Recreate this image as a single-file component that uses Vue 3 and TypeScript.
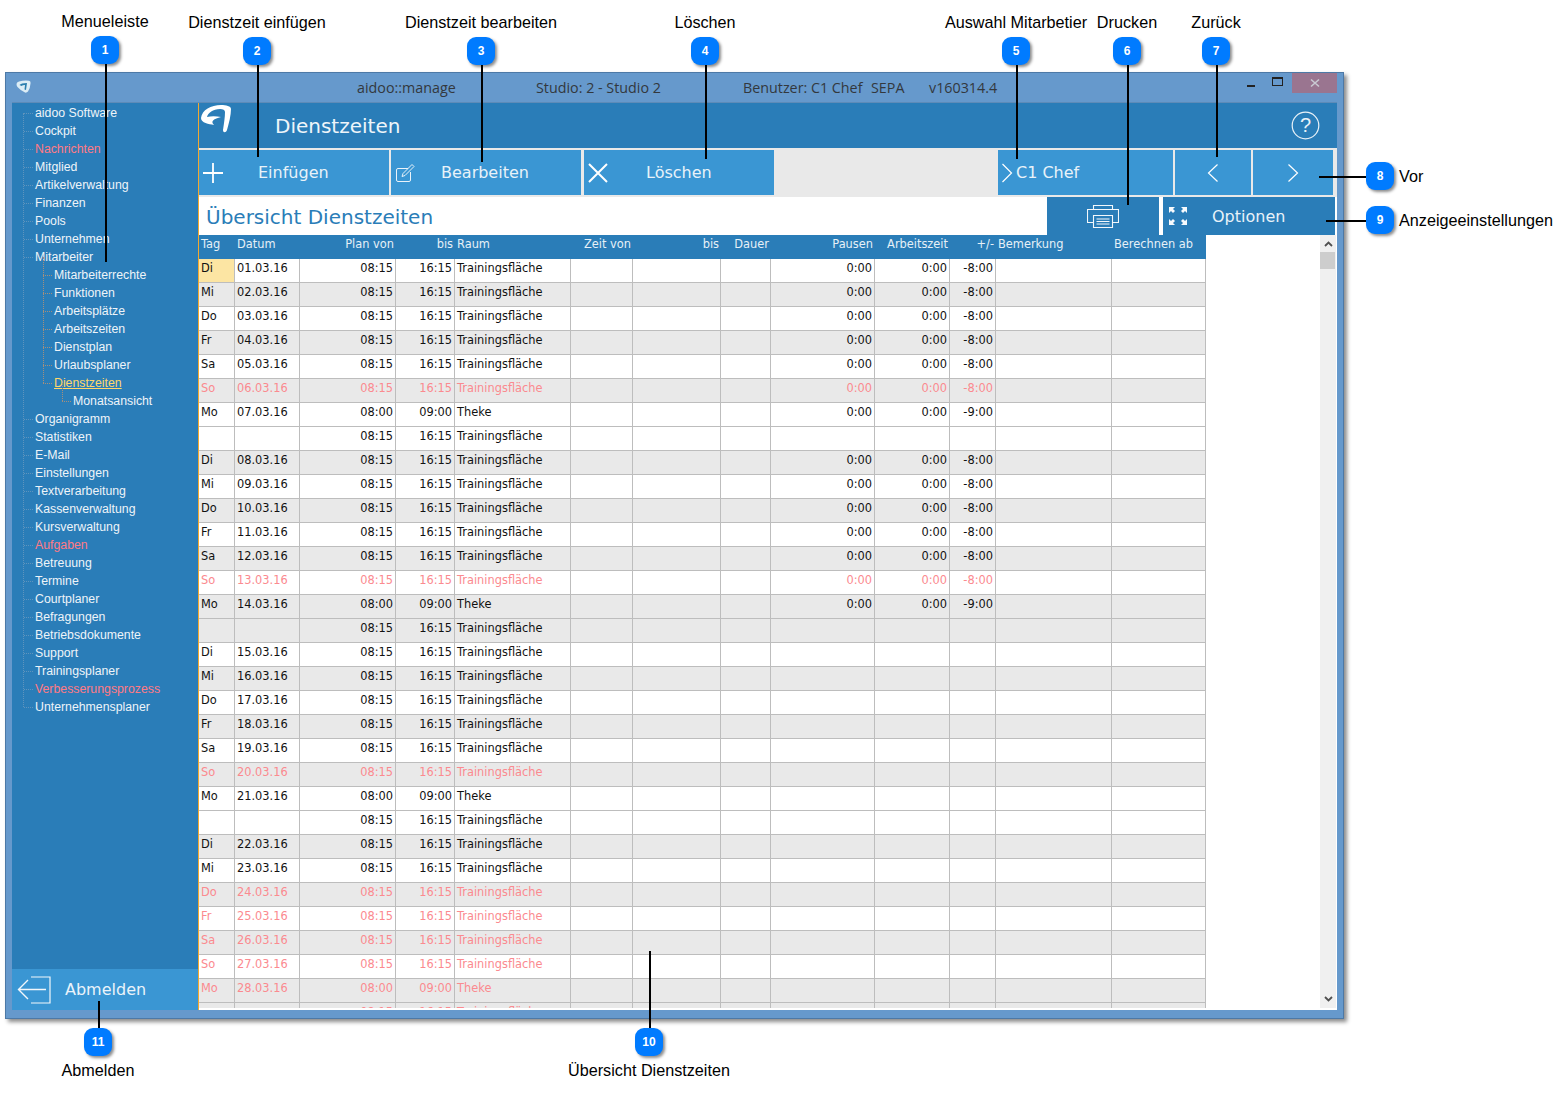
<script setup lang="ts">
interface MenuItem { text: string; level: number; red?: boolean; active?: boolean }
interface Callout { n: number; x: number; y: number; label: string; lx: number; ly: number; x2: number; y2: number; side?: boolean }
interface Row { tag: string; date: string; von: string; bis: string; raum: string; totals: string; red: boolean; band: boolean }

const menu: MenuItem[] = [
  { text: "aidoo Software", level: 0 },
  { text: "Cockpit", level: 0 },
  { text: "Nachrichten", level: 0, red: true },
  { text: "Mitglied", level: 0 },
  { text: "Artikelverwaltung", level: 0 },
  { text: "Finanzen", level: 0 },
  { text: "Pools", level: 0 },
  { text: "Unternehmen", level: 0 },
  { text: "Mitarbeiter", level: 0 },
  { text: "Mitarbeiterrechte", level: 1 },
  { text: "Funktionen", level: 1 },
  { text: "Arbeitsplätze", level: 1 },
  { text: "Arbeitszeiten", level: 1 },
  { text: "Dienstplan", level: 1 },
  { text: "Urlaubsplaner", level: 1 },
  { text: "Dienstzeiten", level: 1, active: true },
  { text: "Monatsansicht", level: 2 },
  { text: "Organigramm", level: 0 },
  { text: "Statistiken", level: 0 },
  { text: "E-Mail", level: 0 },
  { text: "Einstellungen", level: 0 },
  { text: "Textverarbeitung", level: 0 },
  { text: "Kassenverwaltung", level: 0 },
  { text: "Kursverwaltung", level: 0 },
  { text: "Aufgaben", level: 0, red: true },
  { text: "Betreuung", level: 0 },
  { text: "Termine", level: 0 },
  { text: "Courtplaner", level: 0 },
  { text: "Befragungen", level: 0 },
  { text: "Betriebsdokumente", level: 0 },
  { text: "Support", level: 0 },
  { text: "Trainingsplaner", level: 0 },
  { text: "Verbesserungsprozess", level: 0, red: true },
  { text: "Unternehmensplaner", level: 0 },
];

const columns = [
  { name: "Tag", w: 36 }, { name: "Datum", w: 65 }, { name: "Plan von", w: 96, right: true },
  { name: "bis", w: 59, right: true }, { name: "Raum", w: 116 }, { name: "Zeit von", w: 62, right: true },
  { name: "bis", w: 88, right: true }, { name: "Dauer", w: 50, right: true }, { name: "Pausen", w: 104, right: true },
  { name: "Arbeitszeit", w: 75, right: true }, { name: "+/-", w: 46, right: true },
  { name: "Bemerkung", w: 116 }, { name: "Berechnen ab", w: 94 },
];

// Zeilen pro Tag: Montag hat zwei Einträge, die Streifen laufen pro Tag
function buildRows(): Row[] {
  const names = ["Di", "Mi", "Do", "Fr", "Sa", "So", "Mo"];
  const rows: Row[] = [];
  let band = false;
  for (let d = 1; d <= 28; d++) {
    const tag = names[(d - 1) % 7];
    const date = String(d).padStart(2, "0") + ".03.16";
    const red = tag === "So" || d >= 24;
    const totals = d <= 14;
    if (tag === "Mo") {
      rows.push({ tag, date, von: "08:00", bis: "09:00", raum: "Theke", totals: totals ? "-9:00" : "", red, band });
      rows.push({ tag: "", date: "", von: "08:15", bis: "16:15", raum: "Trainingsfläche", totals: "", red, band });
    } else {
      rows.push({ tag, date, von: "08:15", bis: "16:15", raum: "Trainingsfläche", totals: totals ? "-8:00" : "", red, band });
    }
    band = !band;
  }
  return rows;
}
const rows = buildRows();

const callouts: Callout[] = [
  { n: 1, x: 105, y: 50, label: "Menueleiste", lx: 105, ly: 21, x2: 105, y2: 262 },
  { n: 2, x: 257, y: 51, label: "Dienstzeit einfügen", lx: 257, ly: 22, x2: 257, y2: 157 },
  { n: 3, x: 481, y: 51, label: "Dienstzeit bearbeiten", lx: 481, ly: 22, x2: 481, y2: 162 },
  { n: 4, x: 705, y: 51, label: "Löschen", lx: 705, ly: 22, x2: 705, y2: 159 },
  { n: 5, x: 1016, y: 51, label: "Auswahl Mitarbetier", lx: 1016, ly: 22, x2: 1016, y2: 159 },
  { n: 6, x: 1127, y: 51, label: "Drucken", lx: 1127, ly: 22, x2: 1127, y2: 205 },
  { n: 7, x: 1216, y: 51, label: "Zurück", lx: 1216, ly: 22, x2: 1216, y2: 157 },
  { n: 8, x: 1380, y: 176, label: "Vor", lx: 1399, ly: 176, x2: 1319, y2: 176, side: true },
  { n: 9, x: 1380, y: 220, label: "Anzeigeeinstellungen", lx: 1399, ly: 220, x2: 1326, y2: 220, side: true },
  { n: 10, x: 649, y: 1042, label: "Übersicht Dienstzeiten", lx: 649, ly: 1070, x2: 649, y2: 951 },
  { n: 11, x: 98, y: 1042, label: "Abmelden", lx: 98, ly: 1070, x2: 98, y2: 1001 },
];

function lineStyle(c: Callout) {
  if (c.side) {
    return { left: c.x2 + "px", top: c.y + "px", width: c.x - c.x2 + "px", height: "1.5px" };
  }
  const top = Math.min(c.y, c.y2);
  return { left: c.x + "px", top: top + "px", width: "1.5px", height: Math.abs(c.y2 - c.y) + "px" };
}
</script>

<template>
  <div class="page">
    <div class="window">
      <div class="titlebar">
        <svg class="app-icon" width="15" height="13" viewBox="0 0 15 13">
          <path d="M.5 4Q.5 2 3 1.5Q8 .2 13 .8Q14.8 1 14.6 3Q14.3 8 12 11.5Q10.5 13 9 12.5Q4 10 1.5 7Q.5 6 .5 4Z" fill="#dcedf5" />
          <path d="M3.5 5Q5 3 11 3L10 10 8.5 9.6 9 5Q6.5 5 5.5 6Z" fill="#2b7fae" />
        </svg>
        <span class="t1">aidoo::manage</span>
        <span class="t2">Studio: 2 - Studio 2</span>
        <span class="t3">Benutzer: C1 Chef</span>
        <span class="t4">SEPA</span>
        <span class="t5">v160314.4</span>
        <div class="win-btns">
          <span class="win-min"></span>
          <span class="win-max"></span>
          <span class="win-close">
            <svg width="10" height="10" viewBox="0 0 10 10"><path d="M1 1.5 9 8.5M9 1.5 1 8.5" stroke="#c9c9d2" stroke-width="1.6" /></svg>
          </span>
        </div>
      </div>

      <div class="client">
        <aside class="sidebar">
          <div class="tree">
            <div class="tree-inner">
              <div
                v-for="m in menu"
                :key="m.text"
                class="tree-item"
                :class="['lv' + m.level, { red: m.red, active: m.active }]"
              >
                <span>{{ m.text }}</span>
              </div>
            </div>
          </div>
          <div class="logout">
            <svg width="34" height="28" viewBox="0 0 34 28" fill="none" stroke="#f2f7fb" stroke-width="1.2">
              <path d="M14 1H33V27H14" />
              <path d="M29 13.5H1.5M11 4 1.5 13.5 11 23" stroke-width="1.4" />
            </svg>
            <span>Abmelden</span>
          </div>
        </aside>

        <main class="main">
          <header class="head">
            <svg class="logo" width="34" height="30" viewBox="0 0 34 30">
              <path d="M2 14C3 6 12 1 22 1C27 1 32 2 32 5C32 11 30 19 28 26C27 29 24 29 24 26C25 19 26 13 26 8C26 6 24 5 21 5C14 5 9 9 8 13C12 12 17 12 22 13C15 15 11 17 15 21C10 20 2 19 2 14Z" fill="#fff" />
            </svg>
            <h1>Dienstzeiten</h1>
            <svg class="help" width="29" height="29" viewBox="0 0 29 29">
              <circle cx="14.5" cy="14.5" r="13.3" fill="none" stroke="#eaf2f8" stroke-width="1.2" />
              <text x="14.5" y="21" text-anchor="middle" class="help-q">?</text>
            </svg>
          </header>

          <div class="toolbar">
            <div class="btn w-ins">
              <svg width="22" height="22" viewBox="0 0 22 22"><path d="M11 1V21M1 11H21" stroke="#fff" stroke-width="1.8" /></svg>
              <span class="btn-ins">Einfügen</span>
            </div>
            <div class="btn w-edit">
              <svg width="20" height="20" viewBox="0 0 20 20" fill="none" stroke="#e9f3fa" stroke-width="1">
                <path d="M13 5.5H3Q1.5 5.5 1.5 7V17Q1.5 18.5 3 18.5H14Q15.5 18.5 15.5 17V9" />
                <path d="M7 13.5 8 10.5 17 1.5 19 3.5 10 12.5Z" />
              </svg>
              <span class="btn-edit">Bearbeiten</span>
            </div>
            <div class="btn w-del">
              <svg width="22" height="22" viewBox="0 0 22 22"><path d="M2 2 20 20M20 2 2 20" stroke="#fff" stroke-width="2" /></svg>
              <span class="btn-del">Löschen</span>
            </div>
            <div class="spacer"></div>
            <div class="btn w-chef">
              <svg width="12" height="22" viewBox="0 0 12 22" fill="none"><path d="M1.5 2 10.5 11 1.5 20" stroke="#fff" stroke-width="1.2" /></svg>
              <span class="btn-chef">C1 Chef</span>
            </div>
            <div class="btn w-prev center">
              <svg width="12" height="20" viewBox="0 0 12 20" fill="none"><path d="M10.5 1.5 1.5 10 10.5 18.5" stroke="#fff" stroke-width="1.2" /></svg>
            </div>
            <div class="btn w-next center">
              <svg width="12" height="20" viewBox="0 0 12 20" fill="none"><path d="M1.5 1.5 10.5 10 1.5 18.5" stroke="#fff" stroke-width="1.2" /></svg>
            </div>
          </div>

          <div class="subbar">
            <div class="subtitle">Übersicht Dienstzeiten</div>
            <div class="print">
              <svg width="32" height="23" viewBox="0 0 32 23" fill="none" stroke="#f2f7fb" stroke-width="1.1">
                <path d="M6.5 4.5V.5H25.5V4.5" />
                <path d="M6.5 17.5H.5V4.5H31.5V17.5H25.5" />
                <path d="M6.5 10.5H25.5V22.5H6.5Z" />
                <path d="M9.5 14H22.5M9.5 16.5H22.5M9.5 19H22.5" />
              </svg>
            </div>
            <div class="options">
              <svg width="18" height="18" viewBox="0 0 18 18" fill="#f6fafd">
                <path d="M0 0H6L4 2 6 4 4 6 2 4 0 6ZM18 0V6L16 4 14 6 12 4 14 2 12 0ZM0 18V12L2 14 4 12 6 14 4 16 6 18ZM18 18H12L14 16 12 14 14 12 16 14 18 12Z" />
              </svg>
              <span>Optionen</span>
            </div>
          </div>

          <div class="grid-area">
            <div class="table-clip">
              <table class="times">
                <colgroup>
                  <col v-for="(c, i) in columns" :key="i" :style="{ width: c.w + 'px' }" />
                </colgroup>
                <thead>
                  <tr>
                    <th v-for="(c, i) in columns" :key="i" :class="{ right: c.right }">{{ c.name }}</th>
                  </tr>
                </thead>
                <tbody>
                  <tr v-for="(r, i) in rows" :key="i" :class="{ band: r.band, red: r.red }">
                    <td :class="{ today: i === 0 }">{{ r.tag }}</td>
                    <td class="date">{{ r.date }}</td>
                    <td class="right">{{ r.von }}</td>
                    <td class="right">{{ r.bis }}</td>
                    <td>{{ r.raum }}</td>
                    <td></td>
                    <td></td>
                    <td></td>
                    <td class="right">{{ r.totals ? "0:00" : "" }}</td>
                    <td class="right">{{ r.totals ? "0:00" : "" }}</td>
                    <td class="right">{{ r.totals }}</td>
                    <td></td>
                    <td></td>
                  </tr>
                </tbody>
              </table>
            </div>
            <div class="scrollbar">
              <svg class="arrow-up" width="9" height="6" viewBox="0 0 9 6" fill="none"><path d="M1 5 4.5 1.5 8 5" stroke="#505050" stroke-width="1.8" /></svg>
              <div class="thumb"></div>
              <svg class="arrow-down" width="9" height="6" viewBox="0 0 9 6" fill="none"><path d="M1 1 4.5 4.5 8 1" stroke="#505050" stroke-width="1.8" /></svg>
            </div>
          </div>
        </main>
      </div>
    </div>

    <template v-for="c in callouts" :key="c.n">
      <div class="c-line" :style="lineStyle(c)"></div>
      <div class="c-badge" :style="{ left: c.x - 14 + 'px', top: c.y - 14 + 'px' }">{{ c.n }}</div>
      <div class="c-label" :class="{ side: c.side }" :style="{ left: c.lx + 'px', top: c.ly - 10 + 'px' }">{{ c.label }}</div>
    </template>
  </div>
</template>

<style>
html,
body {
  margin: 0;
  background: #fff;
}
</style>

<style scoped>
.page {
  position: relative;
  width: 1568px;
  height: 1096px;
  padding: 72px 0 0 5px;
  box-sizing: border-box;
  overflow: hidden;
  font-family: "Liberation Sans", Arial, sans-serif;
}
.window {
  width: 1339px;
  height: 947px;
  box-sizing: border-box;
  background: #6699cc;
  border: 1px solid #4d79a6;
  box-shadow: 3px 3px 4px rgba(0, 0, 0, 0.45);
  display: flex;
  flex-direction: column;
}
.titlebar {
  height: 29px;
  display: flex;
  align-items: center;
  padding-left: 10px;
  position: relative;
  color: #33383d;
  font-family: "Open Sans", sans-serif;
  font-size: 14.3px;
}
.app-icon { margin: -3px 326px 0 0; flex: none; }
.t1 { width: 179px; }
.t2 { width: 207px; }
.t3 { width: 128px; }
.t4 { width: 58px; }
.win-btns {
  position: absolute;
  right: 6px;
  top: 0;
  height: 20px;
  display: flex;
}
.win-min {
  width: 8px;
  height: 2px;
  margin: 12px 17px 0 0;
  background: #222;
}
.win-max {
  width: 9px;
  height: 6px;
  margin: 4px 9px 0 0;
  border: 1px solid #222;
  border-top-width: 2px;
}
.win-close {
  width: 45px;
  height: 20px;
  background: #9a7590;
  display: flex;
  align-items: center;
  justify-content: center;
}

.client {
  margin: 0 6px;
  height: 908px;
  display: flex;
  border-top: 1px solid #5d8bb8;
  box-sizing: border-box;
}
.sidebar {
  width: 187px;
  flex: none;
  box-sizing: border-box;
  background: #2a7db8;
  border-right: 1px solid #f0a830;
  display: flex;
  flex-direction: column;
  justify-content: space-between;
}
.tree {
  margin: 10px 0 0 11px;
  height: 594px;
  border-left: 1px dotted #5f94bd;
}
.tree-inner { margin-top: -9px; }
.tree-item {
  position: relative;
  height: 18px;
  line-height: 18px;
  font-size: 12.3px;
  color: #eef4f9;
  white-space: nowrap;
}
.tree-item::before {
  content: "";
  position: absolute;
  top: 9px;
  width: 9px;
  border-top: 1px dotted #5f94bd;
}
.tree-item.lv0 { padding-left: 11px; }
.tree-item.lv1 { padding-left: 30px; }
.tree-item.lv2 { padding-left: 49px; }
.tree-item.lv0::before { left: 0; }
.tree-item.lv1::before { left: 19px; border-top-color: #a58f7c; }
.tree-item.lv2::before { left: 38px; border-top-color: #a58f7c; }
.tree-item.lv1::after,
.tree-item.lv2::after {
  content: "";
  position: absolute;
  top: -9px;
  height: 18px;
  border-left: 1px dotted #a58f7c;
}
.tree-item.lv1::after { left: 19px; }
.tree-item.lv2::after { left: 38px; }
.tree-item.red { color: #ff7a85; }
.tree-item.active span {
  color: #ffd76a;
  text-decoration: underline;
}
.logout {
  height: 41px;
  background: #3a96d3;
  display: flex;
  align-items: center;
  padding-left: 5px;
  color: #eaf3fa;
  font-family: "DejaVu Sans", sans-serif;
  font-size: 16px;
}
.logout svg { margin-right: 14px; flex: none; }

.main {
  flex: 1;
  min-width: 0;
  display: flex;
  flex-direction: column;
  font-family: "DejaVu Sans", sans-serif;
}
.head {
  height: 45px;
  flex: none;
  background: #2a7db8;
  position: relative;
  display: flex;
  align-items: center;
}
.logo { margin: -14px 42px 0 0; flex: none; }
.head h1 {
  margin: 0;
  font-size: 20px;
  font-weight: 400;
  color: #eef5fa;
}
.help { margin-left: auto; margin-right: 17px; flex: none; }
.help-q {
  font-family: "Liberation Sans", sans-serif;
  font-size: 20px;
  fill: #eaf2f8;
}
.toolbar {
  height: 49px;
  flex: none;
  box-sizing: border-box;
  padding: 2px 0;
  background: #e9e9e9;
  display: flex;
  gap: 2px;
}
.btn {
  background: #3a96d3;
  color: #e8f2f9;
  font-size: 16px;
  display: flex;
  align-items: center;
  white-space: nowrap;
}
.btn.center { justify-content: center; }
.w-ins { width: 190px; padding-left: 3px; box-sizing: border-box; }
.btn-ins { margin-left: 34px; }
.w-edit { width: 190px; padding-left: 4px; box-sizing: border-box; }
.btn-edit { margin-left: 26px; }
.w-del { width: 190px; margin-left: 1px; padding-left: 3px; box-sizing: border-box; }
.btn-del { margin-left: 37px; }
.spacer { width: 220px; }
.w-chef { width: 175px; padding-left: 3px; box-sizing: border-box; }
.btn-chef { margin-left: 3px; }
.w-prev { width: 76px; }
.w-next { width: 80px; }

.subbar {
  height: 38px;
  flex: none;
  background: #fff;
  display: flex;
}
.subtitle {
  width: 848px;
  box-sizing: border-box;
  padding-left: 7px;
  line-height: 40px;
  font-size: 20px;
  color: #2a7db8;
}
.print {
  width: 112px;
  background: #2a7db8;
  display: flex;
  align-items: center;
  justify-content: center;
}
.options {
  width: 172px;
  margin-left: 4px;
  background: #2a7db8;
  color: #e8f2f9;
  font-size: 16px;
  display: flex;
  align-items: center;
  box-sizing: border-box;
  padding-left: 6px;
}
.options span { margin-left: 25px; }

.grid-area {
  flex: 1;
  min-height: 0;
  position: relative;
  display: flex;
  justify-content: space-between;
  background: #fff;
  padding-bottom: 2px;
}
.table-clip {
  width: 1007px;
  overflow: hidden;
}
.times {
  width: 1007px;
  table-layout: fixed;
  border-collapse: separate;
  border-spacing: 0;
  font-size: 11.4px;
}
.times th {
  height: 24px;
  padding: 2px 2px 0;
  box-sizing: border-box;
  background: #2a7db8;
  color: #e6f0f7;
  font-weight: 400;
  text-align: left;
  vertical-align: top;
  white-space: nowrap;
  overflow: visible;
}
.times td {
  height: 24px;
  padding: 2px 2px 0;
  box-sizing: border-box;
  vertical-align: top;
  color: #111;
  border-right: 1px solid #bdbdbd;
  border-bottom: 1px solid #bdbdbd;
  white-space: nowrap;
  overflow: hidden;
}
.times .right { text-align: right; }
.times tr.band td { background: #e9e9e9; }
.times tr.red td { color: #fb8a8f; }
.times td.today { background: #fce5a3; }
.scrollbar {
  width: 16px;
  margin-right: 1px;
  background: #f0f0f0;
  position: relative;
  flex: none;
}
.arrow-up { position: absolute; left: 4px; top: 6px; }
.arrow-down { position: absolute; left: 4px; bottom: 6px; }
.thumb {
  position: absolute;
  left: 0;
  top: 17px;
  width: 15px;
  height: 17px;
  background: #cdcdcd;
}

.c-line {
  position: absolute;
  background: #000;
}
.c-badge {
  position: absolute;
  width: 28px;
  height: 28px;
  border-radius: 9px;
  background: #007bff;
  box-shadow: 2px 2px 3px rgba(0, 0, 0, 0.45);
  color: #fff;
  font-size: 12px;
  font-weight: 700;
  line-height: 28px;
  text-align: center;
}
.c-label {
  position: absolute;
  height: 20px;
  line-height: 20px;
  font-size: 16.2px;
  color: #000;
  white-space: nowrap;
  transform: translateX(-50%);
}
.c-label.side { transform: none; }
</style>
